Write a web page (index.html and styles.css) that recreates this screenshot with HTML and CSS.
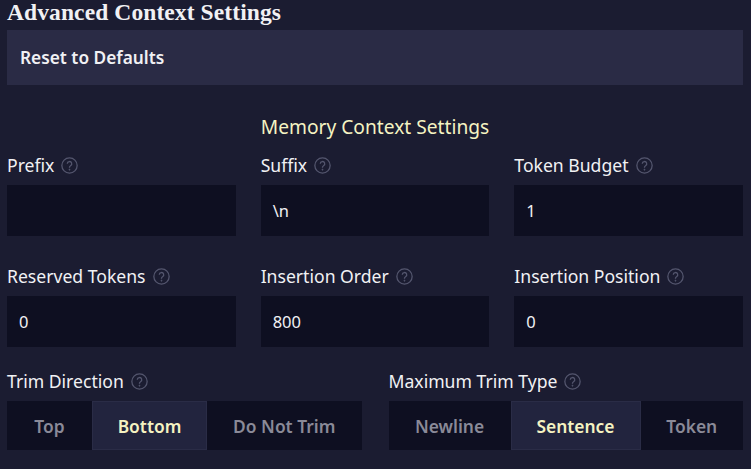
FILE: index.html
```html
<!DOCTYPE html>
<html>
<head>
<meta charset="utf-8">
<link rel="stylesheet" href="styles.css">
</head>
<body>
<div class="page">
  <h1 class="title">Advanced Context Settings</h1>
  <button class="reset">Reset to Defaults</button>
  <h2 class="section">Memory Context Settings</h2>
  <div class="grid3">
    <div class="field">
      <div class="label">Prefix <svg class="help" viewBox="0 0 16 16"><circle cx="8" cy="8" r="7.2" /><path d="M5.9 6.3a2.1 2.1 0 1 1 3.1 1.9c-.7.4-1 .8-1 1.5v.5" /><circle class="dot" cx="8" cy="11.9" r=".55" /></svg></div>
      <div class="input"></div>
    </div>
    <div class="field">
      <div class="label">Suffix <svg class="help" viewBox="0 0 16 16"><circle cx="8" cy="8" r="7.2" /><path d="M5.9 6.3a2.1 2.1 0 1 1 3.1 1.9c-.7.4-1 .8-1 1.5v.5" /><circle class="dot" cx="8" cy="11.9" r=".55" /></svg></div>
      <div class="input">\n</div>
    </div>
    <div class="field">
      <div class="label">Token Budget <svg class="help" viewBox="0 0 16 16"><circle cx="8" cy="8" r="7.2" /><path d="M5.9 6.3a2.1 2.1 0 1 1 3.1 1.9c-.7.4-1 .8-1 1.5v.5" /><circle class="dot" cx="8" cy="11.9" r=".55" /></svg></div>
      <div class="input">1</div>
    </div>
    <div class="field">
      <div class="label">Reserved Tokens <svg class="help" viewBox="0 0 16 16"><circle cx="8" cy="8" r="7.2" /><path d="M5.9 6.3a2.1 2.1 0 1 1 3.1 1.9c-.7.4-1 .8-1 1.5v.5" /><circle class="dot" cx="8" cy="11.9" r=".55" /></svg></div>
      <div class="input">0</div>
    </div>
    <div class="field">
      <div class="label">Insertion Order <svg class="help" viewBox="0 0 16 16"><circle cx="8" cy="8" r="7.2" /><path d="M5.9 6.3a2.1 2.1 0 1 1 3.1 1.9c-.7.4-1 .8-1 1.5v.5" /><circle class="dot" cx="8" cy="11.9" r=".55" /></svg></div>
      <div class="input">800</div>
    </div>
    <div class="field">
      <div class="label">Insertion Position <svg class="help" viewBox="0 0 16 16"><circle cx="8" cy="8" r="7.2" /><path d="M5.9 6.3a2.1 2.1 0 1 1 3.1 1.9c-.7.4-1 .8-1 1.5v.5" /><circle class="dot" cx="8" cy="11.9" r=".55" /></svg></div>
      <div class="input">0</div>
    </div>
  </div>
  <div class="grid2">
    <div class="field">
      <div class="label">Trim Direction <svg class="help" viewBox="0 0 16 16"><circle cx="8" cy="8" r="7.2" /><path d="M5.9 6.3a2.1 2.1 0 1 1 3.1 1.9c-.7.4-1 .8-1 1.5v.5" /><circle class="dot" cx="8" cy="11.9" r=".55" /></svg></div>
      <div class="seg">
        <div class="opt w-top">Top</div>
        <div class="opt sel w-bottom">Bottom</div>
        <div class="opt grow">Do Not Trim</div>
      </div>
    </div>
    <div class="field">
      <div class="label">Maximum Trim Type <svg class="help" viewBox="0 0 16 16"><circle cx="8" cy="8" r="7.2" /><path d="M5.9 6.3a2.1 2.1 0 1 1 3.1 1.9c-.7.4-1 .8-1 1.5v.5" /><circle class="dot" cx="8" cy="11.9" r=".55" /></svg></div>
      <div class="seg">
        <div class="opt w-newline">Newline</div>
        <div class="opt sel w-sentence">Sentence</div>
        <div class="opt grow">Token</div>
      </div>
    </div>
  </div>
</div>
</body>
</html>
```

FILE: styles.css
```css
html, body {
  margin: 0;
  padding: 0;
  background: #1b1c31;
  height: 100%;
  overflow: hidden;
}
.page {
  padding: 0 8px 0 7px;
  font-family: "Source Sans Pro", "Noto Sans", sans-serif;
  color: #f1f1f4;
}
.title {
  margin: 0;
  font-family: "Liberation Serif", serif;
  font-weight: bold;
  font-size: 23.5px;
  line-height: 25px;
  height: 28px;
  letter-spacing: 0.1px;
}
.reset {
  display: block;
  width: 100%;
  height: 55px;
  margin-top: 2px;
  border: 0;
  background: #2a2b45;
  color: #f1f1f4;
  font-family: inherit;
  font-weight: 600;
  font-size: 17.3px;
  text-align: left;
  padding: 0 13px;
}
.section {
  margin: 0;
  margin-top: 30px;
  text-align: center;
  color: #f5f3c2;
  font-weight: 400;
  font-size: 19.2px;
  line-height: 24px;
}
.grid3 {
  display: grid;
  grid-template-columns: 1fr 1fr 1fr;
  column-gap: 25px;
  row-gap: 28px;
  margin-top: 14px;
}
.grid2 {
  display: grid;
  grid-template-columns: 1fr 1fr;
  column-gap: 27px;
  margin-top: 22px;
}
.label {
  display: flex;
  align-items: center;
  font-size: 17.6px;
  line-height: 24px;
  height: 24px;
  margin-bottom: 8px;
  white-space: nowrap;
}
.help {
  width: 17px;
  height: 17px;
  margin-left: 7px;
  fill: none;
  stroke: #54566e;
  stroke-width: 1.2;
}
.help .dot {
  fill: #54566e;
  stroke: #54566e;
  stroke-width: 0.6;
}
.input {
  height: 51px;
  background: #0e0f21;
  display: flex;
  align-items: center;
  padding: 0 12px;
  font-size: 16.5px;
  color: #f1f1f4;
}
.seg {
  display: flex;
  height: 49px;
  background: #0e0f21;
}
.opt {
  display: flex;
  align-items: center;
  justify-content: center;
  font-weight: 600;
  font-size: 17.4px;
  color: #8a8a98;
}
.opt.sel {
  background: #22243e;
  color: #f5f3c2;
  box-shadow: inset 0 0 0 1px #2a2c46;
}
.w-top { width: 85px; }
.w-bottom { width: 115px; }
.w-newline { width: 122px; }
.w-sentence { width: 130px; }
.grow { flex: 1; }
```
